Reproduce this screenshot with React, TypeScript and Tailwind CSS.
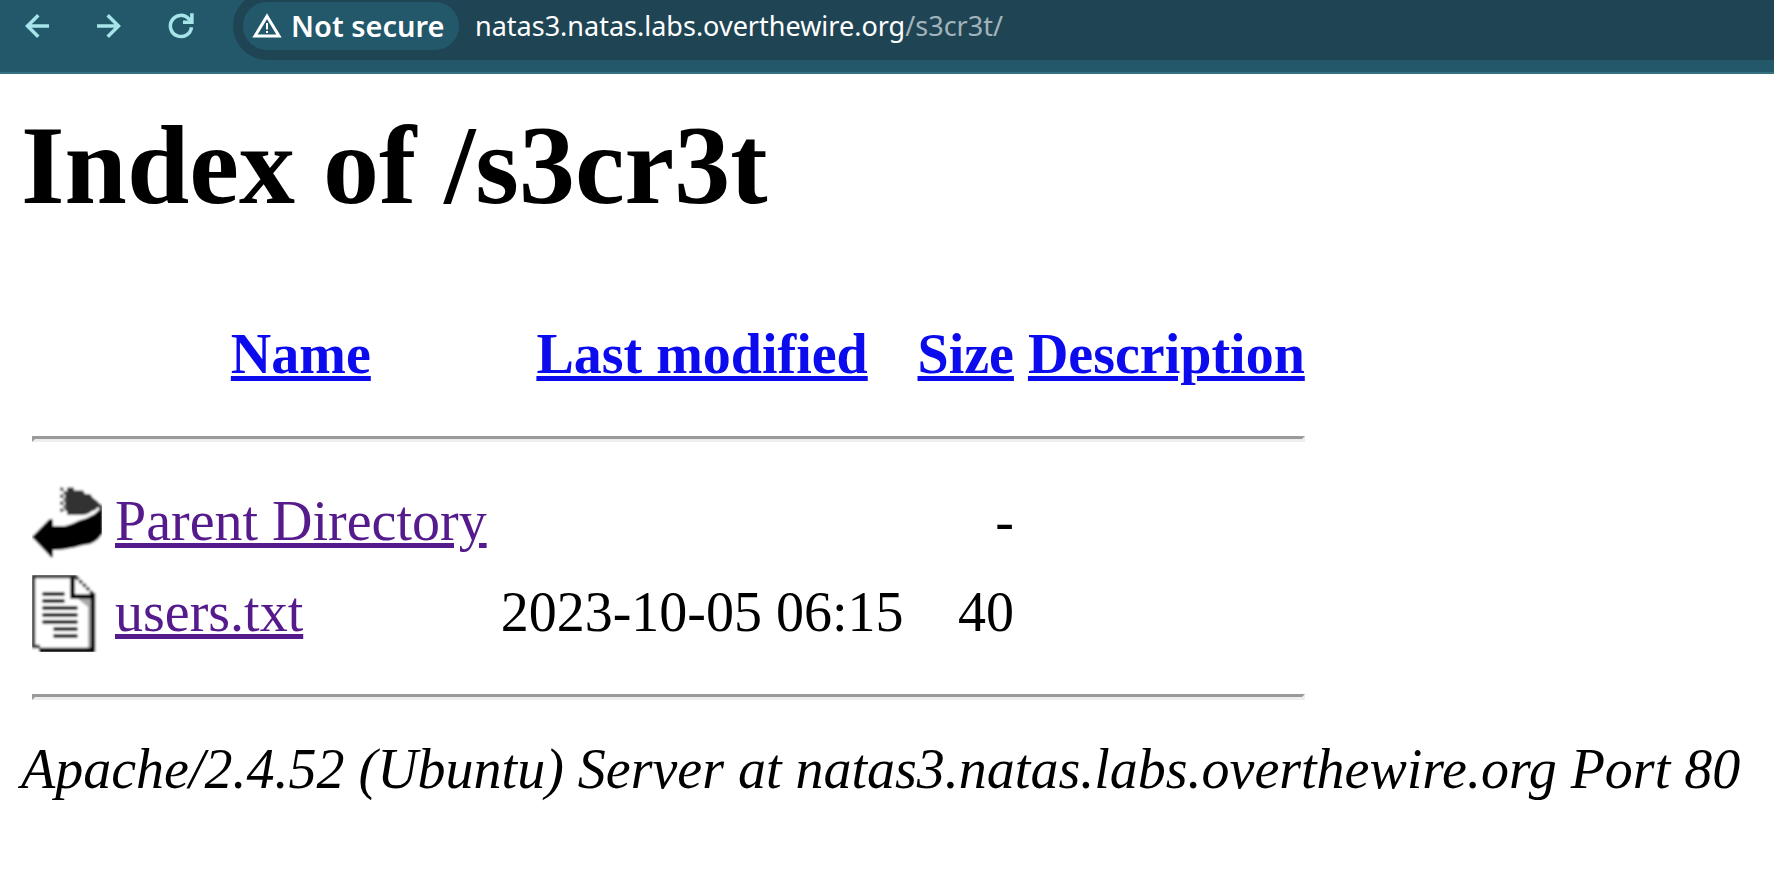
const iconProps = {
  width: 36,
  height: 36,
  viewBox: "0 0 36 36",
  fill: "none",
  stroke: "currentColor",
  strokeWidth: 3.5,
  "aria-hidden": true,
} as const;

function BackIcon() {
  return (
    <svg {...iconProps}>
      <path d="M30 18H8.500M19.300 7.200L8.500 18L19.300 28.800" />
    </svg>
  );
}

function ForwardIcon() {
  return (
    <svg {...iconProps}>
      <path d="M6 18H27.500M16.700 7.200L27.500 18L16.700 28.800" />
    </svg>
  );
}

function ReloadIcon() {
  return (
    <svg {...iconProps}>
      <path d="M28.500 19.200A10.600 10.600 0 1 1 25.600 10.600L28.500 13.500" />
      <path d="M28.900 5.300V14.300H20" />
    </svg>
  );
}

function WarningIcon() {
  return (
    <svg width="30" height="26" viewBox="0 0 30 26" aria-hidden="true">
      <path d="M15 3.200L27 23H3Z" fill="none" stroke="currentColor" strokeWidth="3" />
      <path d="M14 10h2v6.500h-2zM14 18h2v2h-2z" fill="currentColor" />
    </svg>
  );
}

function BackArrowImage() {
  return (
    <svg width="70" height="77" viewBox="0 0 70 77" role="img" aria-label="[PARENTDIR]">
      <defs>
        <filter id="soft-arrow" x="0" y="0" width="1" height="1">
          <feGaussianBlur stdDeviation="0.9" />
        </filter>
      </defs>
      <g filter="url(#soft-arrow)">
        <path d="M0 0H70V77H0Z" fill="#fff" />
        <path d="M34 7H35V3.500H42V6.500H51L53 10H58L61 14L65 17L69 21L67 25L60 27L56 30L50 31H35V27H33V8Z" fill="#333" />
        <path d="M28 3.500h3.500v3.500h-3.500zM31.500 7h3.500v3.500h-3.500zM28 10.500h3.500v3.500h-3.500zM31.500 14h3.500v3.500h-3.500zM28 17.500h3.500v3.500h-3.500zM31.500 21h3.500v3.500h-3.500zM28 24.500h3.500v3.500h-3.500z" fill="#555" />
        <path
          d="M0 53L17 35.500Q20.500 33 21 38V42H33C43 39.500 46 36 55 34L64 29L70 20V50C67 54 65 57 58 60C48 61 38 66 21 66V71Q20.500 76 17 71Z"
          fill="#000"
        />
        <path d="M43 32.500L45 35L53 33.500M56 31L62 29M64 27L67 24" fill="none" stroke="#fff" strokeWidth="2.500" />
      </g>
    </svg>
  );
}

function TextFileImage() {
  return (
    <svg width="70" height="77" viewBox="0 0 70 77" role="img" aria-label="[TXT]">
      <defs>
        <filter id="soft-page" x="0" y="0" width="1" height="1">
          <feGaussianBlur stdDeviation="0.9" />
        </filter>
      </defs>
      <g filter="url(#soft-page)">
        <path d="M0 0H70V77H0Z" fill="#fff" />
        <path d="M45 1.500H1.500V71.500H8" fill="none" stroke="#333" strokeWidth="3.500" />
        <path d="M46 24H59V73H56V32Z" fill="#aaa" />
        <path d="M44 2L62 20" stroke="#333" strokeWidth="3.500" strokeDasharray="3.500 1.500" />
        <path d="M40.500 2V21.500H61" fill="none" stroke="#000" strokeWidth="4.500" />
        <path d="M61 18V75H7" fill="none" stroke="#000" strokeWidth="4.500" />
        <path
          d="M12 19H31M12 26H31M12 33H44M12 40H44M12 47H44M23 54H44M23 61H44"
          stroke="#111"
          strokeWidth="3.800"
          strokeLinecap="round"
        />
      </g>
    </svg>
  );
}

function Rule() {
  return (
    <tr>
      <th colSpan={5} className="pt-[3px] pr-[3px] pb-1 pl-1">
        <hr className="my-7 h-0 border-[3px] border-t-[#9a9a9a] border-r-[#eeeeee] border-b-[#eeeeee] border-l-[#9a9a9a]" />
      </th>
    </tr>
  );
}

const iconCell = "pt-[3px] pr-[2px] pb-1 pl-1";
const cell = "pt-[3px] pr-[3px] pb-2 pl-1";
const numberCell = "pt-[3px] pr-[3px] pb-2 pl-1 text-right";
const headLink = "text-[#0b0bee] underline";
const visited = "text-[#551a8b] underline";

export default function App() {
  return (
    <div className="min-h-screen overflow-x-hidden bg-white text-black">
      <header className="flex h-[74px] items-start overflow-hidden border-b-2 border-[#35727f] bg-[#22586a] font-['Noto_Sans',sans-serif]">
        <nav className="flex h-[52px] shrink-0 items-center gap-9 pr-[34px] pl-[19px] text-[#a5e4e8]">
          <button type="button" aria-label="Back"><BackIcon /></button>
          <button type="button" aria-label="Forward"><ForwardIcon /></button>
          <button type="button" aria-label="Reload"><ReloadIcon /></button>
        </nav>
        <div className="-mt-2 flex h-[68px] grow items-center gap-4 rounded-l-full bg-[#1f4555] pl-[10px]">
          <button
            type="button"
            className="flex h-12 w-[216px] shrink-0 items-center gap-[9px] rounded-full bg-[#22586a] pl-[9px] text-[29px] leading-9 font-semibold whitespace-nowrap text-white"
          >
            <WarningIcon />
            <span>Not secure</span>
          </button>
          <p className="text-[27px] leading-9 whitespace-nowrap text-white">
            natas3.natas.labs.overthewire.org<span className="text-[#a3b3bb]">/s3cr3t/</span>
          </p>
        </div>
      </header>

      <main className="pt-[29px] pl-[21px] font-['Liberation_Serif',serif] text-[56px] leading-[60px] whitespace-nowrap">
        <h1 className="mb-[79px] text-[112px] leading-[125px] font-bold">Index of /s3cr3t</h1>
        <table className="border-separate border-spacing-[7px]">
          <thead>
            <tr>
              <th className={iconCell}><div className="h-[77px] w-[70px]" /></th>
              <th className={cell}><a href="#name" className={headLink}>Name</a></th>
              <th className={cell}><a href="#modified" className={headLink}>Last modified</a></th>
              <th className={cell}><a href="#size" className={headLink}>Size</a></th>
              <th className={cell}><a href="#description" className={headLink}>Description</a></th>
            </tr>
            <Rule />
          </thead>
          <tbody>
            <tr>
              <td className={iconCell}><div className="h-[77px]"><BackArrowImage /></div></td>
              <td className={cell}><a href="#parent" className={visited}>Parent Directory</a></td>
              <td className={cell} />
              <td className={numberCell}>-</td>
              <td className={cell} />
            </tr>
            <tr>
              <td className={iconCell}><div className="h-[77px]"><TextFileImage /></div></td>
              <td className={cell}><a href="#users" className={visited}>users.txt</a></td>
              <td className={numberCell}>2023-10-05 06:15</td>
              <td className={numberCell}>40</td>
              <td className={cell} />
            </tr>
            <Rule />
          </tbody>
        </table>
        <address>Apache/2.4.52 (Ubuntu) Server at natas3.natas.labs.overthewire.org Port 80</address>
      </main>
    </div>
  );
}
